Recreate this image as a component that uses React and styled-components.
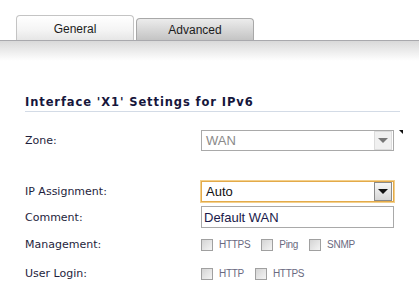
import React from 'react'
import styled, { createGlobalStyle } from 'styled-components'

const Global = createGlobalStyle`
  body {
    margin: 0;
    background: #fff;
  }
`

const Page = styled.div`
  width: 419px;
  height: 303px;
  overflow: hidden;
  background: #fff;
`

const TabBar = styled.div`
  display: flex;
  align-items: flex-end;
  column-gap: 2px;
  height: 25px;
  padding: 15px 0 0 16px;
  border-bottom: 1px solid #a9a9ad;
`

const Tab = styled.div`
  box-sizing: border-box;
  width: 118px;
  height: ${p => (p.active ? '25px' : '22px')};
  display: flex;
  align-items: center;
  justify-content: center;
  border: 1px solid ${p => (p.active ? '#c4c4c4' : '#a8a8a8')};
  border-bottom: none;
  border-radius: 4px 4px 0 0;
  background: ${p =>
    p.active
      ? 'linear-gradient(#ffffff, #f4f4f4 60%, #e6e6e6)'
      : 'linear-gradient(#ececec, #d8d8d8 50%, #c4c4c4)'};
  font-family: 'Liberation Sans', Arial, sans-serif;
  font-size: 12px;
  color: #1c1c1c;
  padding-top: ${p => (p.active ? '1px' : '0')};
`

const Fade = styled.div`
  height: 20px;
  background: linear-gradient(#d9d9d9, #ffffff);
`

const Content = styled.div`
  padding: 34px 0 0 25px;
`

const Heading = styled.div`
  width: 375px;
  padding-bottom: 2px;
  border-bottom: 1px solid #d3dbe6;
  font-family: 'DejaVu Sans', Verdana, sans-serif;
  font-weight: bold;
  font-size: 11.5px;
  letter-spacing: 0.9px;
  color: #16163c;
`

const Form = styled.div`
  display: grid;
  grid-template-columns: 176px 193px;
  align-items: center;
  margin-top: 16px;
`

const Label = styled.div`
  height: ${p => p.h || 28}px;
  display: flex;
  align-items: center;
  font-family: 'DejaVu Sans', Verdana, sans-serif;
  font-size: 11px;
  color: #1e1e3c;
`

const Cell = styled.div`
  height: ${p => p.h || 28}px;
  display: flex;
  align-items: center;
  position: relative;
`

const Select = styled.div`
  box-sizing: border-box;
  width: 193px;
  height: 21px;
  display: flex;
  align-items: center;
  border: 1px solid ${p => (p.focus ? '#e3aa4a' : '#a9a9a9')};
  box-shadow: ${p => (p.focus ? '0 0 0 1px #f3d08c' : 'none')};
  background: #fff;
  font-family: 'Liberation Sans', Arial, sans-serif;
  font-size: 13px;
  color: ${p => (p.disabled ? '#8a8a8a' : '#111')};
`

const SelectText = styled.span`
  flex: 1;
  padding-left: 4px;
`

const Arrow = styled.span`
  box-sizing: border-box;
  width: 18px;
  height: 100%;
  margin-right: 1px;
  display: flex;
  align-items: center;
  justify-content: center;
  border: 1px solid ${p => (p.disabled ? '#dcdcdc' : '#8a8a8a')};
  background: ${p => (p.disabled ? '#f0f0f0' : 'linear-gradient(#f6f6f6, #d6d6d6)')};
  &::after {
    content: '';
    border-left: 5px solid transparent;
    border-right: 5px solid transparent;
    border-top: 5px solid ${p => (p.disabled ? '#777' : '#111')};
  }
`

const Marker = styled.span`
  position: absolute;
  left: 198px;
  top: 2px;
  width: 0;
  height: 0;
  border-top: 4px solid #111;
  border-left: 4px solid transparent;
`

const TextInput = styled.div`
  box-sizing: border-box;
  width: 193px;
  height: 22px;
  display: flex;
  align-items: center;
  padding-left: 2px;
  border: 1px solid #a9a9a9;
  font-family: 'Liberation Sans', Arial, sans-serif;
  font-size: 13px;
  color: #1a1a4a;
`

const Checks = styled.div`
  display: flex;
  align-items: center;
  column-gap: 11px;
`

const Check = styled.label`
  display: flex;
  align-items: center;
  column-gap: 6px;
  font-family: 'Liberation Sans', Arial, sans-serif;
  font-size: 10px;
  letter-spacing: -0.3px;
  color: #6a6a80;
`

const Box = styled.span`
  box-sizing: border-box;
  width: 12px;
  height: 12px;
  border: 1px solid #a0a0a0;
  background: linear-gradient(135deg, #d4d4d4, #f4f4f4);
`

const Spacer = styled.div`
  grid-column: 1 / 3;
  height: ${p => p.h}px;
`

export default function App() {
  return (
    <Page>
      <Global />
      <TabBar>
        <Tab active>General</Tab>
        <Tab>Advanced</Tab>
      </TabBar>
      <Fade />
      <Content>
        <Heading>Interface 'X1' Settings for IPv6</Heading>
        <Form>
          <Label h={24}>Zone:</Label>
          <Cell h={24}>
            <Select disabled>
              <SelectText>WAN</SelectText>
              <Arrow disabled />
            </Select>
            <Marker />
          </Cell>
          <Spacer h={26} />
          <Label h={26}>IP Assignment:</Label>
          <Cell h={26}>
            <Select focus>
              <SelectText>Auto</SelectText>
              <Arrow />
            </Select>
          </Cell>
          <Label h={26}>Comment:</Label>
          <Cell h={26}>
            <TextInput>Default WAN</TextInput>
          </Cell>
          <Label h={29}>Management:</Label>
          <Cell h={29}>
            <Checks>
              <Check><Box />HTTPS</Check>
              <Check><Box />Ping</Check>
              <Check><Box />SNMP</Check>
            </Checks>
          </Cell>
          <Label h={29}>User Login:</Label>
          <Cell h={29}>
            <Checks>
              <Check><Box />HTTP</Check>
              <Check><Box />HTTPS</Check>
            </Checks>
          </Cell>
        </Form>
      </Content>
    </Page>
  )
}
